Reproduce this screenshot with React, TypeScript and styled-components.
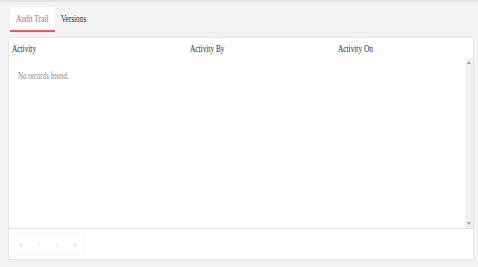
import React from "react";
import styled, { createGlobalStyle } from "styled-components";

const Global = createGlobalStyle`
  html, body { margin: 0; padding: 0; }
  body {
    background: #f3f3f3;
    font-family: "Liberation Serif", "Times New Roman", serif;
    width: 478px;
    height: 267px;
    overflow: hidden;
  }
`;

const Page = styled.div`
  display: flex;
  flex-direction: column;
  height: 267px;
  box-sizing: border-box;
  border-top: 2px solid #e2e2e2;
  padding: 0 4px 7px 8px;
`;

// text in the capture is narrow, so squeeze it horizontally
const Text = styled.span`
  display: inline-block;
  white-space: nowrap;
  transform: scaleX(0.7);
  transform-origin: left center;
`;

const TabBar = styled.div`
  display: flex;
  align-items: flex-end;
  height: 33px;
  padding-left: 2px;
`;

const Tab = styled.div<{ $active?: boolean; $w: number }>`
  width: ${(p) => p.$w}px;
  box-sizing: border-box;
  height: 25px;
  display: flex;
  align-items: center;
  padding: 0 6px;
  font-size: 10.5px;
  color: ${(p) => (p.$active ? "#e4585b" : "#2b2b2b")};
  background: ${(p) => (p.$active ? "#ffffff" : "transparent")};
  border-bottom: 2px solid ${(p) => (p.$active ? "#e4585b" : "transparent")};
  margin-bottom: 3px;
`;

const Panel = styled.div`
  flex: 1;
  display: flex;
  flex-direction: column;
  background: #fff;
  border: 1px solid #e6e6e6;
  margin-top: 2px;
`;

const HeaderRow = styled.div`
  display: grid;
  grid-template-columns: 178px 148px 1fr;
  height: 20px;
  align-items: center;
  padding-left: 3px;
  font-size: 10.5px;
  color: #2b2b2b;
`;

const Body = styled.div`
  flex: 1;
  display: flex;
  border-bottom: 1px solid #e2e2e2;
`;

const Rows = styled.div`
  flex: 1;
  padding: 12px 9px;
  font-size: 10px;
  color: #8a8a8a;
`;

const Scrollbar = styled.div`
  width: 8px;
  background: #f1f1f1;
  display: flex;
  flex-direction: column;
  justify-content: space-between;
  align-items: center;
  padding: 3px 0;
`;

const Arrow = styled.div<{ $down?: boolean }>`
  width: 0;
  height: 0;
  border-left: 2px solid transparent;
  border-right: 2px solid transparent;
  ${(p) =>
    p.$down
      ? "border-top: 3px solid #a3a3a3;"
      : "border-bottom: 3px solid #a3a3a3;"}
`;

const Footer = styled.div`
  height: 30px;
  display: flex;
  align-items: center;
  padding-left: 2px;
`;

const Pager = styled.div`
  display: flex;
  border: 1px solid #f6f6f6;
  height: 20px;
`;

const PageBtn = styled.div`
  width: 18px;
  display: flex;
  align-items: center;
  justify-content: center;
  font-size: 8px;
  color: #d2d2d2;
`;

export default function App() {
  return (
    <>
      <Global />
      <Page>
        <TabBar>
          <Tab $active $w={45}>
            <Text>Audit Trail</Text>
          </Tab>
          <Tab $w={40}>
            <Text>Versions</Text>
          </Tab>
        </TabBar>
        <Panel>
          <HeaderRow>
            <Text>Activity</Text>
            <Text>Activity By</Text>
            <Text>Activity On</Text>
          </HeaderRow>
          <Body>
            <Rows>
              <Text>No records found.</Text>
            </Rows>
            <Scrollbar>
              <Arrow />
              <Arrow $down />
            </Scrollbar>
          </Body>
          <Footer>
            <Pager>
              <PageBtn>«</PageBtn>
              <PageBtn>‹</PageBtn>
              <PageBtn>›</PageBtn>
              <PageBtn>»</PageBtn>
            </Pager>
          </Footer>
        </Panel>
      </Page>
    </>
  );
}
